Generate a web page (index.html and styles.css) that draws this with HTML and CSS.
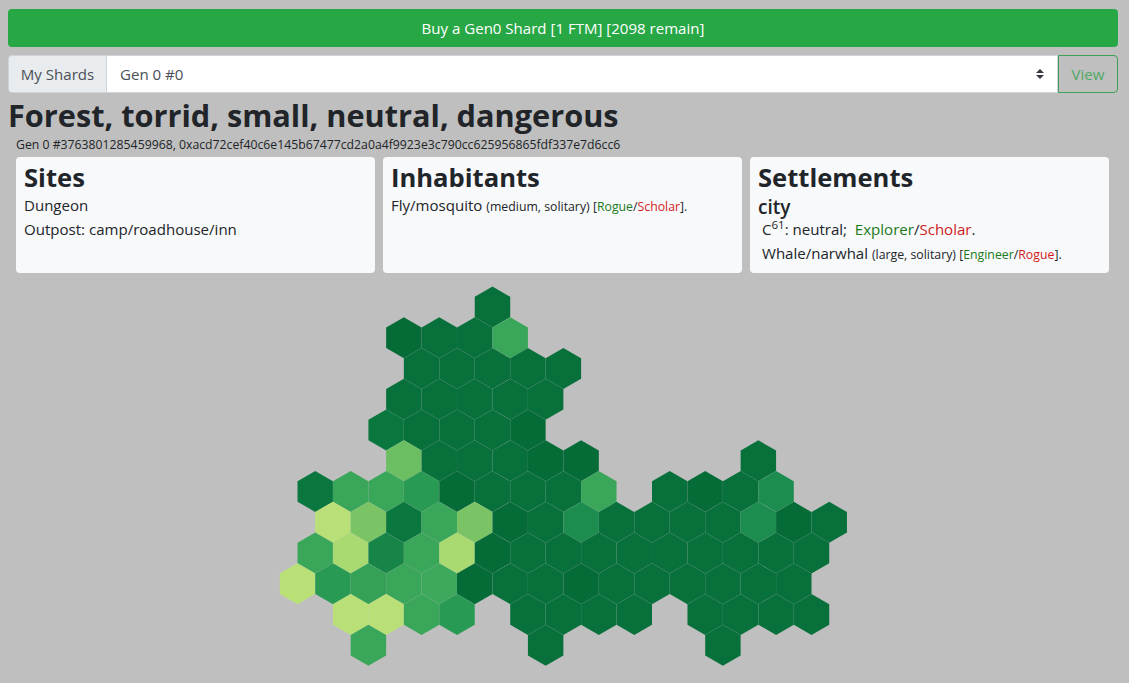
FILE: index.html
```html
<!DOCTYPE html>
<html lang="en">
<head>
  <meta charset="UTF-8">
  <meta name="viewport" content="width=device-width, initial-scale=1.0">
  <title>Gen0 Shards</title>
  <link rel="stylesheet" href="styles.css">
</head>
<body>

<button class="buy-btn">Buy a Gen0 Shard [1 FTM] [2098 remain]</button>

<div class="input-group">
  <span class="input-label">My Shards</span>
  <select class="shard-select">
    <option>Gen 0 #0</option>
  </select>
  <button class="view-btn">View</button>
</div>

<h1 class="shard-title">Forest, torrid, small, neutral, dangerous</h1>
<div class="shard-id">Gen 0 #3763801285459968, 0xacd72cef40c6e145b67477cd2a0a4f9923e3c790cc625956865fdf337e7d6cc6</div>

<div class="cards">
  <div class="card">
    <h3>Sites</h3>
    <div class="line">Dungeon</div>
    <div class="line">Outpost: camp/roadhouse/inn</div>
  </div>
  <div class="card">
    <h3>Inhabitants</h3>
    <div class="line">Fly/mosquito <small>(medium, solitary) [<span class="good">Rogue</span>/<span class="bad">Scholar</span>].</small></div>
  </div>
  <div class="card">
    <h3>Settlements</h3>
    <h5>city</h5>
    <div class="line indent faction">C<sup>61</sup>: neutral;&nbsp; <span class="good">Explorer</span>/<span class="bad">Scholar</span>.</div>
    <div class="line indent">Whale/narwhal <small>(large, solitary) [<span class="good">Engineer</span>/<span class="bad">Rogue</span>].</small></div>
  </div>
</div>

<svg id="map" class="map" width="1129" height="400" viewBox="0 280 1129 400"></svg>

<script>
  const DX = 35.45;
  const DY = 30.75;
  const R = 20.4;

  const a = "#07703b", b = "#056b37", c = "#0a773f";
  const m1 = "#3aa65a", m2 = "#289a53", m3 = "#1c8c4f";
  const l1 = "#b9e076", l2 = "#a8da71", l3 = "#7bc466", l4 = "#6cbe63";

  // each row: first column (in half steps from x = 297.5) and its cells, null = gap
  const rows = [
    [11, [a]],
    [6, [b, a, a, m1]],
    [7, [a, a, a, a, a]],
    [6, [a, a, a, a, a]],
    [5, [c, a, a, a, b]],
    [6, [l4, a, a, a, b, b, null, null, null, null, a]],
    [1, [c, m1, m1, m2, b, a, a, a, m1, null, a, b, a, m3]],
    [2, [l1, l3, c, m1, l3, b, a, m3, a, a, a, a, m3, b, a]],
    [1, [m1, l2, "#178547", m1, l2, b, a, a, a, a, a, a, a, a, a]],
    [0, [l1, m2, "#35a157", m1, "#3ea95c", b, a, a, b, a, a, a, a, a, a]],
    [3, [l1, l1, m1, m2, null, a, a, a, a, null, a, a, a, a]],
    [4, [m1, null, null, null, null, a, null, null, null, null, a]]
  ];

  function hexPoints(cx, cy) {
    const h = DX / 2;
    return [
      [cx, cy - R], [cx + h, cy - R / 2], [cx + h, cy + R / 2],
      [cx, cy + R], [cx - h, cy + R / 2], [cx - h, cy - R / 2]
    ].map(p => p[0].toFixed(2) + "," + p[1].toFixed(2)).join(" ");
  }

  let html = "";
  rows.forEach((row, r) => {
    row[1].forEach((fill, i) => {
      if (!fill) return;
      const cx = 297.5 + (row[0] + i * 2) * DX / 2;
      const cy = 307 + r * DY;
      html += '<polygon class="hex" fill="' + fill + '" points="' + hexPoints(cx, cy) + '"/>';
    });
  });
  document.getElementById("map").innerHTML = html;
</script>

</body>
</html>
```

FILE: styles.css
```css
html {
  overflow: hidden;
}

body {
  font-family: "Open Sans", "Noto Sans", sans-serif;
  font-size: 15.05px;
  line-height: 24px;
  background-color: #bfbfbf;
  color: #212529;
  margin: 0;
  padding: 9px 11px 0 8px;
}

.buy-btn {
  display: block;
  width: 100%;
  height: 38px;
  background-color: #28a745;
  color: #fff;
  border: none;
  border-radius: 4px;
  font: inherit;
}

.input-group {
  display: flex;
  height: 38px;
  margin-top: 8px;
}

.input-label {
  display: flex;
  align-items: center;
  justify-content: center;
  width: 99px;
  box-sizing: border-box;
  background-color: #e9ecef;
  color: #495057;
  border: 1px solid #ced4da;
  border-radius: 4px 0 0 4px;
}

.shard-select {
  flex: 1;
  appearance: none;
  background: #fff url("data:image/svg+xml,%3csvg xmlns='http://www.w3.org/2000/svg' width='10' height='10' viewBox='0 0 10 10'%3e%3cpath fill='%23343a40' d='M5 0 9 4H1zM5 10 1 6h8z'/%3e%3c/svg%3e") no-repeat right 12px center;
  border: 1px solid #ced4da;
  border-left: none;
  color: #495057;
  font: inherit;
  padding: 0 12px 0 13px;
  border-radius: 0;
}

.view-btn {
  width: 60px;
  background: transparent;
  border: 1px solid #3f9f5a;
  border-radius: 0 4px 4px 0;
  color: #4fa866;
  font: inherit;
}

.shard-title {
  font-family: "Open Sans", sans-serif;
  font-size: 30.7px;
  font-weight: 700;
  line-height: 36px;
  margin: 4px 0 0;
  white-space: nowrap;
}

.shard-id {
  font-size: 12.25px;
  line-height: 16px;
  margin: 4px 0 4px 8px;
  white-space: nowrap;
}

.cards {
  display: grid;
  grid-template-columns: repeat(3, 359px);
  gap: 8px;
  margin-left: 8px;
}

.card {
  height: 116px;
  box-sizing: border-box;
  background-color: #f8f9fa;
  border-radius: 4px;
  padding: 6px 8px;
}

.card h3 {
  font-family: "Open Sans", sans-serif;
  font-size: 25.6px;
  font-weight: 700;
  line-height: 29px;
  margin: 0 0 1px;
}

.card h5 {
  font-size: 19px;
  font-weight: 600;
  line-height: 22px;
  margin: 4px 0 0;
}

.line {
  white-space: nowrap;
}

.line small {
  font-size: 12.3px;
}

.indent {
  margin-left: 4px;
}

.faction {
  line-height: 23px;
}

.line sup {
  font-size: 11.5px;
  line-height: 0;
}

.good {
  color: #1a7a1a;
}

.bad {
  color: #d01c1c;
}

.map {
  display: block;
  margin: 7px 0 0 -8px;
}

.hex {
  stroke: #fff;
  stroke-opacity: 0.05;
  stroke-width: 0.5;
}
```
